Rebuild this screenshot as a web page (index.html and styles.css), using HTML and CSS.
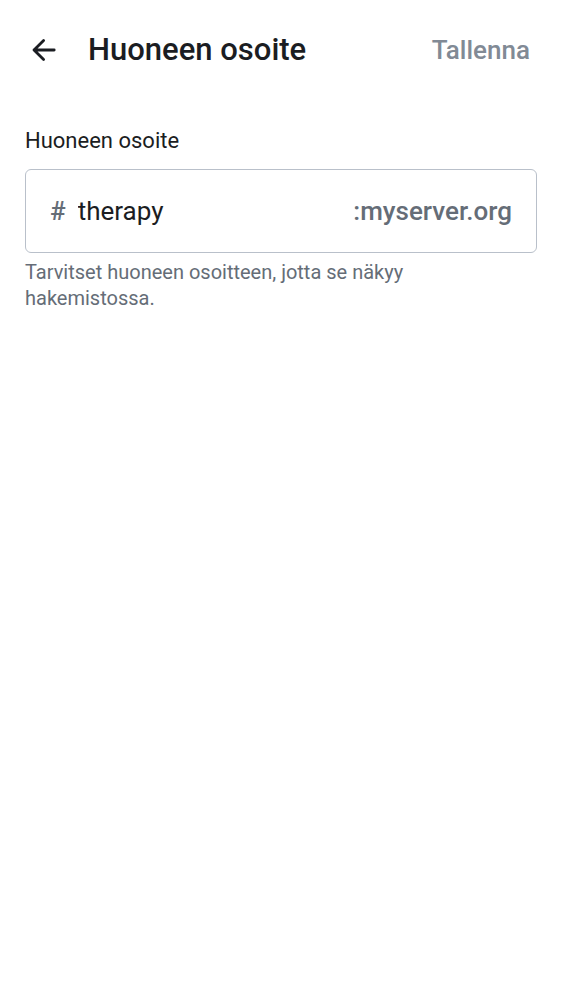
FILE: index.html
```html
<!DOCTYPE html>
<html lang="fi">
<head>
<meta charset="utf-8">
<meta name="viewport" content="width=device-width, initial-scale=1">
<title>Huoneen osoite</title>
<link rel="stylesheet" href="styles.css">
</head>
<body>
<header class="top-bar">
  <button class="back" type="button" aria-label="Takaisin">
    <svg viewBox="0 0 24 24" width="24" height="24" aria-hidden="true"><path d="M22.2 12H2M11.6 2.4 2 12l9.6 9.6" /></svg>
  </button>
  <h1 class="title">Huoneen osoite</h1>
  <button class="save" type="button">Tallenna</button>
</header>
<main class="content">
  <label class="label" for="address">Huoneen osoite</label>
  <div class="field">
    <span class="prefix">#</span>
    <input class="input" id="address" type="text" value="therapy" aria-describedby="hint">
    <span class="server">:myserver.org</span>
  </div>
  <p class="hint" id="hint">Tarvitset huoneen osoitteen, jotta se näkyy hakemistossa.</p>
</main>
</body>
</html>
```
FILE: styles.css
```css
* {
  box-sizing: border-box;
}

body {
  margin: 0;
  background: #fff;
  color: #1b1d22;
  font-family: Roboto, sans-serif;
}

button,
input {
  margin: 0;
  padding: 0;
  border: 0;
  background: none;
  font: inherit;
  color: inherit;
}

.top-bar {
  display: flex;
  align-items: center;
  padding: 30px 32px;
}

.back {
  display: flex;
}

.back svg {
  fill: none;
  stroke: #1b1d22;
  stroke-width: 2.8;
  stroke-linecap: round;
  stroke-linejoin: round;
}

.title {
  flex: 1;
  margin: 0 0 0 32px;
  font-size: 31px;
  font-weight: 500;
  line-height: 40px;
}

.save {
  color: #818a95;
  font-size: 26px;
  font-weight: 500;
  line-height: 40px;
}

.content {
  padding: 26px 25px;
}

.label {
  display: block;
  font-size: 22px;
  line-height: 30px;
}

.field {
  display: flex;
  align-items: center;
  margin-top: 13px;
  padding: 25px 24px;
  border: 1px solid #b9c0ca;
  border-radius: 6px;
  font-size: 26px;
  line-height: 32px;
}

.field:focus-within {
  border-color: #656d77;
}

.prefix,
.server {
  color: #656d77;
  font-weight: 500;
}

.input {
  flex: 1;
  min-width: 0;
  height: 32px;
  margin-left: 12px;
  outline: none;
}

.hint {
  margin: 6px 0 0;
  padding-right: 25px;
  color: #656d77;
  font-size: 20px;
  line-height: 26px;
}
```
